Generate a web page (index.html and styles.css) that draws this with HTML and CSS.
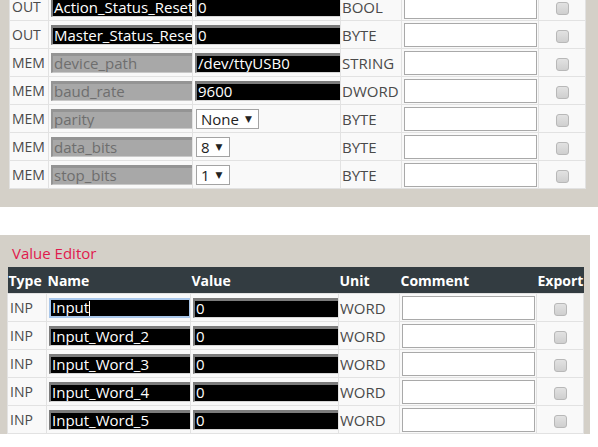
FILE: index.html
```html
<!DOCTYPE html>
<html>
<head>
<meta charset="utf-8">
<link rel="stylesheet" href="styles.css">
</head>
<body>
<div class="panel panel-top">
  <table class="grid grid-top">
    <colgroup><col class="c-type"><col class="c-name"><col class="c-val"><col class="c-unit"><col class="c-com"><col class="c-exp"></colgroup>
    <tr><td class="type">OUT</td><td><div class="fld name">Action_Status_Reset</div></td><td><div class="fld val">0</div></td><td class="unit">BOOL</td><td><div class="com"></div></td><td class="exp"><span class="cb"></span></td></tr>
    <tr><td class="type">OUT</td><td><div class="fld name">Master_Status_Reset</div></td><td><div class="fld val">0</div></td><td class="unit">BYTE</td><td><div class="com"></div></td><td class="exp"><span class="cb"></span></td></tr>
    <tr><td class="type">MEM</td><td><div class="fld name mem">device_path</div></td><td><div class="fld val">/dev/ttyUSB0</div></td><td class="unit">STRING</td><td><div class="com"></div></td><td class="exp"><span class="cb"></span></td></tr>
    <tr><td class="type">MEM</td><td><div class="fld name mem">baud_rate</div></td><td><div class="fld val">9600</div></td><td class="unit">DWORD</td><td><div class="com"></div></td><td class="exp"><span class="cb"></span></td></tr>
    <tr><td class="type">MEM</td><td><div class="fld name mem">parity</div></td><td><span class="sel">None <i class="arr">▼</i></span></td><td class="unit">BYTE</td><td><div class="com"></div></td><td class="exp"><span class="cb"></span></td></tr>
    <tr><td class="type">MEM</td><td><div class="fld name mem">data_bits</div></td><td><span class="sel">8 <i class="arr">▼</i></span></td><td class="unit">BYTE</td><td><div class="com"></div></td><td class="exp"><span class="cb"></span></td></tr>
    <tr><td class="type">MEM</td><td><div class="fld name mem">stop_bits</div></td><td><span class="sel">1 <i class="arr">▼</i></span></td><td class="unit">BYTE</td><td><div class="com"></div></td><td class="exp"><span class="cb"></span></td></tr>
  </table>
</div>
<div class="gap"></div>
<div class="panel panel-bottom">
  <div class="title">Value Editor</div>
  <table class="grid grid-bottom">
    <colgroup><col class="c-type"><col class="c-name"><col class="c-val"><col class="c-unit"><col class="c-com"><col class="c-exp"></colgroup>
    <tr class="head"><th>Type</th><th>Name</th><th>Value</th><th>Unit</th><th>Comment</th><th>Export</th></tr>
    <tr><td class="type">INP</td><td><div class="fld name focus">Input<span class="caret"></span></div></td><td><div class="fld val">0</div></td><td class="unit">WORD</td><td><div class="com"></div></td><td class="exp"><span class="cb"></span></td></tr>
    <tr><td class="type">INP</td><td><div class="fld name">Input_Word_2</div></td><td><div class="fld val">0</div></td><td class="unit">WORD</td><td><div class="com"></div></td><td class="exp"><span class="cb"></span></td></tr>
    <tr><td class="type">INP</td><td><div class="fld name">Input_Word_3</div></td><td><div class="fld val">0</div></td><td class="unit">WORD</td><td><div class="com"></div></td><td class="exp"><span class="cb"></span></td></tr>
    <tr><td class="type">INP</td><td><div class="fld name">Input_Word_4</div></td><td><div class="fld val">0</div></td><td class="unit">WORD</td><td><div class="com"></div></td><td class="exp"><span class="cb"></span></td></tr>
    <tr><td class="type">INP</td><td><div class="fld name">Input_Word_5</div></td><td><div class="fld val">0</div></td><td class="unit">WORD</td><td><div class="com"></div></td><td class="exp"><span class="cb"></span></td></tr>
  </table>
</div>
</body>
</html>
```
FILE: styles.css
```css
html, body {
  margin: 0;
  padding: 0;
  background: #ffffff;
  font-family: "Open Sans", "DejaVu Sans", sans-serif;
  font-size: 14px;
  color: #444;
}

.panel {
  background: #d4d0c8;
  box-sizing: border-box;
}

.panel-top {
  height: 207px;
  padding: 0 13px 0 9px;
  overflow: hidden;
}

.gap {
  height: 28px;
}

.panel-bottom {
  width: 590px;
  padding: 0 7px;
}

.title {
  color: #e0194d;
  font-size: 15px;
  height: 32px;
  padding-top: 8px;
  box-sizing: border-box;
  line-height: 20px;
  padding-left: 5px;
}

.grid {
  width: 576px;
  table-layout: fixed;
  border-collapse: collapse;
  border-spacing: 0;
}

.grid-top {
  margin-top: -8px;
}

.c-type { width: 39px; }
.c-name { width: 144px; }
.c-val { width: 148px; }
.c-unit { width: 61px; }
.c-com { width: 137px; }
.c-exp { width: 47px; }

.grid td {
  height: 27px;
  padding: 0 0 0 2px;
  border: 1px solid #e2e2e2;
  background: #f9f9f9;
  vertical-align: middle;
  white-space: nowrap;
  overflow: hidden;
}

.grid .head th {
  height: 26px;
  padding: 0 0 0 1px;
  background: #333c41;
  color: #ffffff;
  font-weight: bold;
  text-align: left;
  border: none;
  white-space: nowrap;
}

.grid td.type {
  color: #4a4a4a;
  padding-left: 2px;
}

.grid td.unit {
  color: #4a4a4a;
  padding-left: 1px;
  font-size: 15px;
}

.fld {
  height: 20px;
  box-sizing: border-box;
  background: #000;
  color: #fff;
  font-size: 15px;
  border-style: solid;
  border-width: 3px 1px 1px 2px;
  border-color: #7c7c7c #d6d6d6 #d6d6d6 #7c7c7c;
  line-height: 15px;
  padding: 0 1px;
  overflow: hidden;
  white-space: nowrap;
}

.fld.name {
  width: 142px;
}

.fld.val {
  width: 146px;
}

.fld.mem {
  background: #a8a8a8;
  color: #6e6e6e;
  border-color: #949494 #c9c9c9 #c9c9c9 #949494;
}

.fld.focus {
  border: 2px solid #a9c7ea;
  line-height: 15px;
}

.caret {
  display: inline-block;
  width: 1px;
  height: 15px;
  background: #fff;
  vertical-align: -3px;
}

.com {
  width: 133px;
  height: 24px;
  box-sizing: border-box;
  border: 1px solid #a9a9a9;
  background: #fff;
}

.exp {
  text-align: center;
}

.grid td.exp {
  padding: 0;
}

.cb {
  display: inline-block;
  width: 13px;
  height: 13px;
  box-sizing: border-box;
  border: 1px solid #b8b8b8;
  border-radius: 3px;
  background: linear-gradient(#e2e2e2, #cfcfcf);
  vertical-align: middle;
}

.sel {
  display: inline-flex;
  align-items: center;
  height: 20px;
  box-sizing: border-box;
  border: 1px solid #a3a3a3;
  background: #fff;
  color: #222;
  font-size: 15px;
  padding: 0 6px 0 4px;
  gap: 6px;
  margin-left: 1px;
}

.arr {
  font-style: normal;
  font-size: 9px;
}
```
